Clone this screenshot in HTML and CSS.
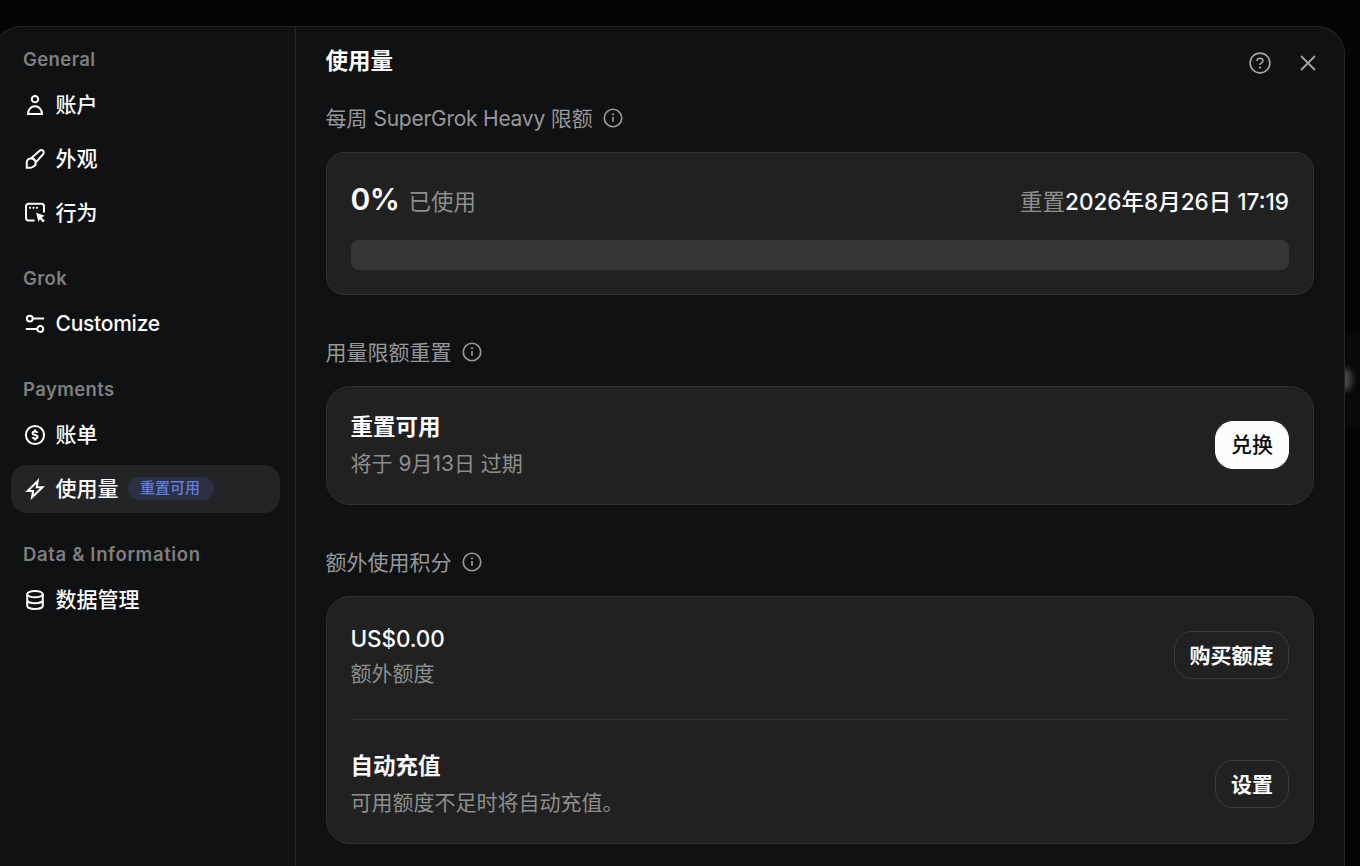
FILE: index.html
```html
<!DOCTYPE html>
<html lang="zh-CN">
<head>
  <meta charset="UTF-8">
  <meta name="viewport" content="width=device-width, initial-scale=1.0">
  <title>使用量</title>
  <link rel="stylesheet" href="styles.css">
</head>
<body>
  <div class="backdrop-strip"></div>
  <div class="backdrop-blob"></div>

  <div class="modal">
    <nav class="sidebar">
      <h3>General</h3>
      <ul>
        <li>
          <svg viewBox="0 0 24 24"><circle cx="12" cy="5.600" r="3.500"/><path d="M4.400 21.700c0-5 3.400-8.400 7.600-8.400s7.600 3.400 7.600 8.400z"/></svg>
          <span>账户</span>
        </li>
        <li>
          <svg viewBox="0 0 24 24"><path d="M3 21.500v-5.300a4.800 4.800 0 1 1 6.600 4.400c-.6.600-1.500.9-2.600.9z"/><path d="M7.800 11.300l9.200-8.200a2.600 2.600 0 0 1 3.800 3.700l-8.400 9.400"/></svg>
          <span>外观</span>
        </li>
        <li>
          <svg viewBox="0 0 24 24"><path d="M11.500 20.300H5a2.800 2.800 0 0 1-2.800-2.800V4.800A2.800 2.800 0 0 1 5 2h14a2.800 2.800 0 0 1 2.800 2.800v6.700"/><path class="solid" d="M13.200 11.700l9.400 3.300-3.300 2 3.400 3.400-1.900 1.900-3.500-3.500-1.500 3z"/><circle class="solid" cx="6.600" cy="6.400" r="1.200"/><circle class="solid" cx="10.400" cy="6.400" r="1.200"/><circle class="solid" cx="14.200" cy="6.400" r="1.200"/></svg>
          <span>行为</span>
        </li>
      </ul>

      <h3>Grok</h3>
      <ul>
        <li>
          <svg viewBox="0 0 24 24"><circle cx="6.300" cy="6.100" r="3.200"/><path d="M9.500 6.100H22M2 17.500h12.500"/><circle cx="17.700" cy="17.500" r="3.200"/></svg>
          <span class="latin">Customize</span>
        </li>
      </ul>

      <h3>Payments</h3>
      <ul>
        <li>
          <svg viewBox="0 0 24 24"><circle cx="12" cy="12" r="9.900"/><path d="M14.700 9.700c-.4-1-1.400-1.500-2.700-1.500-1.500 0-2.600.7-2.600 1.900 0 2.700 5.300 1.200 5.300 3.900 0 1.300-1.200 2-2.700 2-1.400 0-2.400-.6-2.800-1.600M12 6v2.200M12 16v2"/></svg>
          <span>账单</span>
        </li>
        <li class="active">
          <svg viewBox="0 0 24 24"><path d="M15 3.300L3.900 14.300h6l-1.100 6.700L20.200 10h-6.300z"/></svg>
          <span>使用量</span>
          <span class="tag">重置可用</span>
        </li>
      </ul>

      <h3 class="wide">Data &amp; Information</h3>
      <ul>
        <li>
          <svg viewBox="0 0 24 24"><ellipse cx="12" cy="5.600" rx="8.500" ry="3.500"/><path d="M3.500 5.600v12.600c0 2 3.800 3.500 8.500 3.500s8.500-1.500 8.500-3.500V5.600M3.500 12c0 2 3.800 3.500 8.500 3.500s8.500-1.500 8.500-3.500"/></svg>
          <span>数据管理</span>
        </li>
      </ul>
    </nav>

    <main class="content">
      <header class="top">
        <h1>使用量</h1>
        <div class="actions">
          <svg class="help" viewBox="0 0 24 24"><circle cx="12" cy="12" r="10.800"/><path d="M8.800 9.700c0-1.700 1.400-2.900 3.200-2.900s3.200 1.200 3.200 2.800c0 2.200-3.100 2.300-3.200 4.500"/><circle class="solid" cx="12" cy="17" r="1.200"/></svg>
          <svg class="close" viewBox="0 0 16 16"><path d="M1 1l14 14M15 1L1 15"/></svg>
        </div>
      </header>

      <section>
        <h2><span>每周 <span class="latin">SuperGrok Heavy</span> 限额</span>
          <svg viewBox="0 0 24 24"><circle cx="12" cy="12" r="10.500"/><path d="M12 10.800v5.800"/><circle class="solid" cx="12" cy="7.600" r="1.300"/></svg>
        </h2>
        <div class="card usage">
          <div class="usage-row">
            <p class="used"><strong>0%</strong><span class="muted">已使用</span></p>
            <p class="reset"><span class="muted">重置</span>2026年8月26日 17:19</p>
          </div>
          <div class="bar"></div>
        </div>
      </section>

      <section>
        <h2><span>用量限额重置</span>
          <svg viewBox="0 0 24 24"><circle cx="12" cy="12" r="10.500"/><path d="M12 10.800v5.800"/><circle class="solid" cx="12" cy="7.600" r="1.300"/></svg>
        </h2>
        <div class="card">
          <div class="row">
            <div class="lower">
              <p class="title">重置可用</p>
              <p class="desc">将于 9月13日 过期</p>
            </div>
            <button class="primary">兑换</button>
          </div>
        </div>
      </section>

      <section>
        <h2><span>额外使用积分</span>
          <svg viewBox="0 0 24 24"><circle cx="12" cy="12" r="10.500"/><path d="M12 10.800v5.800"/><circle class="solid" cx="12" cy="7.600" r="1.300"/></svg>
        </h2>
        <div class="card">
          <div class="row credit">
            <div>
              <p class="title amount">US$0.00</p>
              <p class="desc">额外额度</p>
            </div>
            <button>购买额度</button>
          </div>
          <div class="row topup">
            <div>
              <p class="title">自动充值</p>
              <p class="desc">可用额度不足时将自动充值。</p>
            </div>
            <button>设置</button>
          </div>
        </div>
      </section>
    </main>
  </div>
</body>
</html>
```
FILE: styles.css
```css
* {
  box-sizing: border-box;
}
body {
  margin: 0;
  height: 866px;
  padding-top: 26px;
  overflow: hidden;
  position: relative;
  background: #050505;
  color: #fcfcfc;
  font-family: Inter, "Noto Sans CJK SC", sans-serif;
}
h1, h2, h3, p, ul {
  margin: 0;
  padding: 0;
}
svg {
  fill: none;
  stroke: currentColor;
  stroke-width: 2;
  flex-shrink: 0;
}
.solid {
  fill: currentColor;
  stroke: none;
}
.latin {
  letter-spacing: -0.25px;
}

/* blurred page behind the dialog */
.backdrop-strip {
  position: absolute;
  right: 0;
  top: 334px;
  width: 40px;
  height: 94px;
  background: #090909;
}
.backdrop-blob {
  position: absolute;
  left: 1334px;
  top: 368px;
  width: 18px;
  height: 23px;
  border-radius: 9px;
  background: #4a4a4a;
  filter: blur(3px);
}

.modal {
  position: relative;
  display: flex;
  width: 1352px;
  height: 840px;
  margin-left: -7px;
  background: #101113;
  border: 1px solid #252628;
  border-bottom: none;
  border-radius: 28px 28px 0 0;
}

.sidebar {
  width: 302px;
  padding: 10px 15px 0 17px;
  border-right: 1px solid #252628;
}
.sidebar h3 {
  height: 44px;
  padding-left: 12px;
  line-height: 44px;
  font-size: 18.5px;
  font-weight: 600;
  letter-spacing: 0.4px;
  color: #7f7f80;
}
.sidebar h3.wide {
  letter-spacing: 0.65px;
}
.sidebar ul {
  display: flex;
  flex-direction: column;
  gap: 6px;
  margin-bottom: 19px;
  list-style: none;
}
.sidebar li {
  display: flex;
  align-items: center;
  height: 48px;
  padding-left: 13px;
  border-radius: 16px;
  font-size: 21px;
  font-weight: 500;
}
.sidebar li svg {
  width: 22px;
  height: 22px;
  margin-right: 9.5px;
  stroke-width: 2.2;
}
.sidebar li span {
  padding-bottom: 4px;
}
.sidebar li .latin {
  padding-bottom: 1px;
}
.sidebar li.active {
  background: #232426;
}
.sidebar li .tag {
  height: 23px;
  margin-left: 9.5px;
  margin-bottom: 2px;
  padding: 0 14px 0 12px;
  border-radius: 12px;
  background: #2b3042;
  color: #637ee0;
  font-size: 15px;
  line-height: 21px;
}

.content {
  flex: 1;
  padding: 0 30px;
}
.top {
  display: flex;
  justify-content: space-between;
  align-items: center;
  height: 76px;
}
.top h1 {
  font-size: 22.5px;
  font-weight: 600;
  line-height: 34px;
  margin-left: -0.5px;
  margin-bottom: 9px;
}
.actions {
  display: flex;
  align-items: center;
  gap: 29px;
  margin-bottom: 4px;
  color: #a5a5a6;
}
.help {
  width: 22px;
  height: 22px;
  stroke-width: 1.8;
}
.close {
  width: 16px;
  height: 16px;
  margin-right: -2px;
  stroke-width: 1.8;
}

section {
  margin-bottom: 42px;
}
section h2 {
  display: flex;
  align-items: center;
  gap: 10px;
  height: 30px;
  margin-left: -0.5px;
  margin-bottom: 19px;
  font-size: 21px;
  font-weight: 400;
  color: #98989a;
}
section h2 > span {
  padding-bottom: 3px;
}
section h2 svg {
  width: 20px;
  height: 20px;
}
.card {
  padding: 0 24px;
  background: #212121;
  border: 1px solid #303030;
  border-radius: 24px;
}
.usage {
  height: 143px;
  padding-top: 26px;
  border-radius: 18px;
}
.usage-row {
  display: flex;
  justify-content: space-between;
  align-items: baseline;
  height: 61px;
  font-size: 22.5px;
  line-height: 40px;
}
.used {
  margin-left: -0.5px;
}
.usage strong {
  margin-right: 9px;
  font-size: 30px;
  font-weight: 600;
  letter-spacing: -0.5px;
}
.muted, .desc {
  color: #8e8e8e;
}
.reset {
  font-weight: 500;
}
.reset .muted {
  font-weight: 400;
}
.bar {
  height: 30px;
  border-radius: 8px;
  background: #363636;
}

.row {
  display: flex;
  justify-content: space-between;
  align-items: center;
  height: 117px;
  padding-bottom: 2px;
}
.row > div {
  margin-left: -0.5px;
}
.row > .lower {
  padding-top: 2px;
}
.title {
  font-size: 22.5px;
  font-weight: 600;
  line-height: 36px;
}
.amount {
  padding-top: 2px;
  line-height: 37px;
  margin-bottom: -2px;
  font-weight: 500;
  letter-spacing: -0.1px;
}
.desc {
  font-size: 21px;
  line-height: 37px;
}
.credit {
  height: 123px;
  padding-bottom: 6px;
  border-bottom: 1px solid #303030;
}
.topup {
  height: 123px;
  padding-top: 5px;
  padding-bottom: 0;
}
button {
  height: 48px;
  padding: 0 15px 3px;
  background: transparent;
  border: 1px solid #3a3a3a;
  border-radius: 18px;
  color: #fcfcfc;
  font-family: inherit;
  font-size: 21px;
  font-weight: 600;
}
.credit button {
  padding: 0 14.5px 3px;
}
button.primary {
  background: #fcfcfc;
  border-color: #fcfcfc;
  color: #0a0a0a;
  font-weight: 500;
}
```
